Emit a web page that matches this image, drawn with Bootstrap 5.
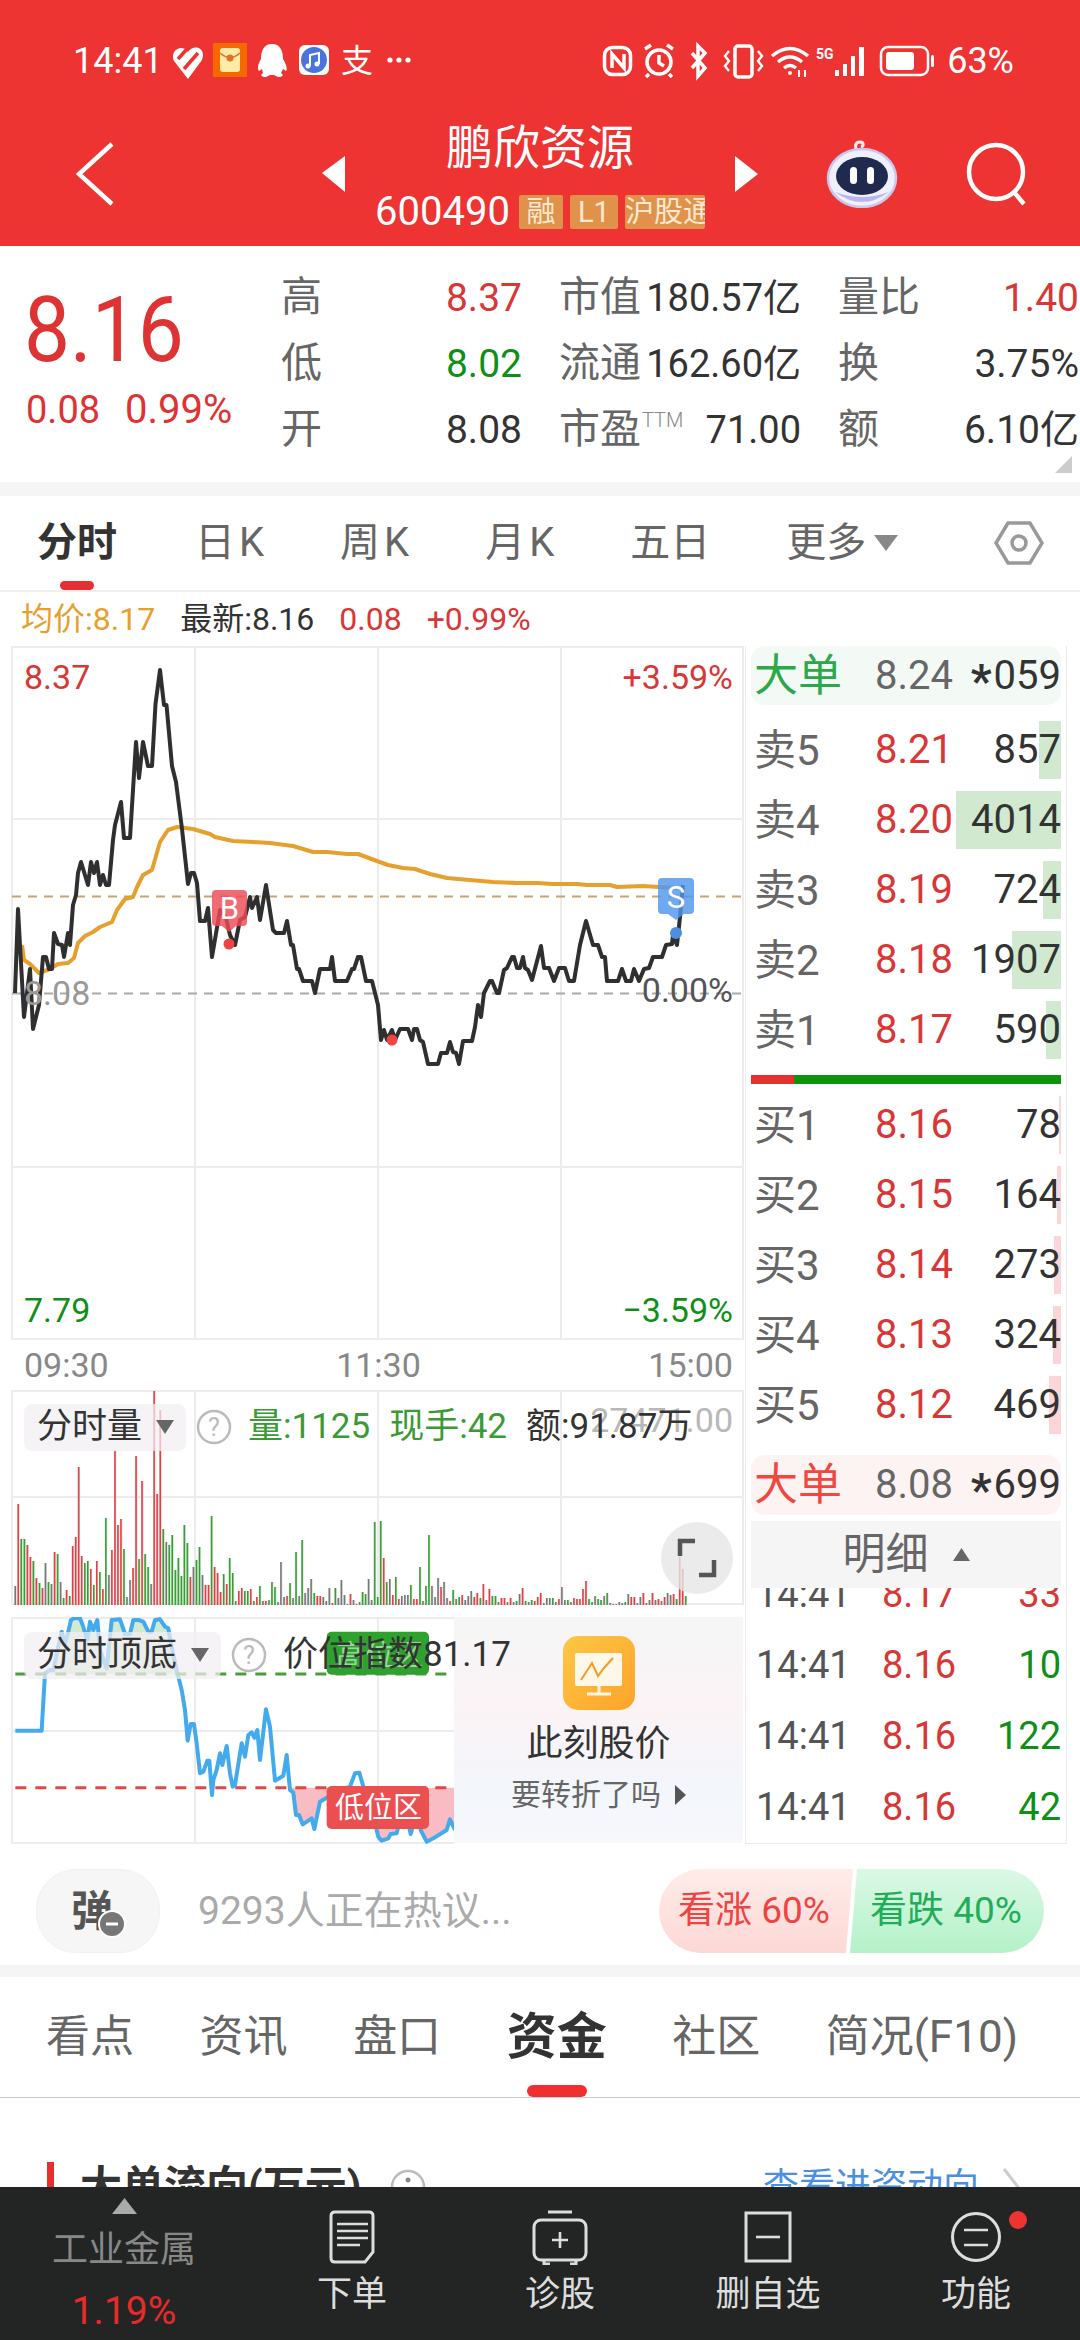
<!DOCTYPE html>
<html lang="zh-CN">
<head>
  <meta charset="UTF-8" />
  <title>鹏欣资源 600490</title>
  <meta name="viewport" content="width=device-width, initial-scale=1" />
  <link href="https://cdn.jsdelivr.net/npm/bootstrap@5.3.0/dist/css/bootstrap.min.css" rel="stylesheet" />
  <style>
    html, body { margin: 0; height: 2340px; overflow: hidden; background: #fff; }
    body { font-family: Roboto, "Noto Sans CJK SC", sans-serif; color: #333; }
    svg { display: block; }
    .c-red { color: #d93636; }
    .c-green { color: #0f8f16; }
    .c-gray { color: #666; }
    .c-vol { color: #3a9a35; }
    .phone { width: 1080px; height: 2340px; }
    .grey-band { height: 14px; background: #f5f5f5; flex: none; }
    .grey-band-thin { height: 12px; }

    /* red header */
    .head-red { background: #ee3333; color: #fff; height: 246px; flex: none; }
    .status-row { height: 122px; padding-left: 73px; padding-right: 66px; font-size: 36px; }
    .status-left { margin-left: 9px; }
    .status-pct { margin-left: 12px; }
    .nav-row { height: 104px; }
    .back-zone { width: 322px; padding-left: 76px; }
    .title-col { width: 390px; align-self: flex-start; }
    .stock-name { font-size: 47px; line-height: 52px; }
    .code-row { margin-top: 21px; height: 34px; width: 330px; }
    .stock-code { font-size: 40px; line-height: 34px; margin-right: 9px; }
    .tag-box { background: #e0924a; color: #fde9d2; font-size: 29px; line-height: 34px; height: 34px; border-radius: 2px; text-align: center; margin-right: 7px; overflow: hidden; white-space: nowrap; }
    .tag-rong { width: 44px; }
    .tag-l1 { width: 48px; }
    .tag-hu { width: 80px; margin-right: 0; }
    .robot-btn { margin-left: 67px; }
    .search-btn { margin-left: 67px; }

    /* quote block */
    .quote-box { height: 236px; flex: none; }
    .price-col { width: 281px; padding: 42px 0 0 24px; color: #dd3333; }
    .price-big { font-size: 82px; line-height: 90px; transform: scaleY(1.1); transform-origin: 50% 80%; }
    .price-sub { font-size: 38px; line-height: 40px; margin-top: 12px; white-space: nowrap; margin-left: 2px; }
    .price-pct { margin-left: 25px; font-size: 40px; }
    .stat-grid { display: grid; grid-template-columns: 241px 242px 241px; column-gap: 37px; grid-auto-rows: 66px; padding-top: 19px; }
    .stat-cell { display: flex; justify-content: space-between; align-items: center; font-size: 39px; white-space: nowrap; }
    .stat-wide { font-size: 38px; }
    .stat-name { font-size: 41px; color: #666; }
    .stat-name sup { font-size: 20px; top: -.8em; color: #888; font-weight: 300; margin-left: 1px; }
    .corner-mark { right: 8px; bottom: 9px; }

    /* chart period tabs */
    .period-tabs { height: 96px; padding-left: 37px; gap: 76px; border-bottom: 2px solid #eee; flex: none; }
    .period-tabs .nav-link { padding: 0; color: #666; font-size: 40px; line-height: 94px; height: 94px; }
    .period-tabs .nav-link.active { color: #333; font-weight: 700; margin-right: 2px; }
    .period-tabs .nav-link.active::after { content: ""; position: absolute; left: 23px; right: 23px; bottom: 0; height: 9px; background: #e53030; border-radius: 5px; }
    .k-letter { margin-left: 4px; }
    .set-btn { right: 36px; top: 24px; }
    .legend-row { height: 54px; font-size: 32px; padding-left: 21px; gap: 25px; flex: none; white-space: nowrap; }
    .legend-avg { color: #e5a02d; }

    /* left column charts */
    .charts-main { height: 1198px; flex: none; }
    .left-col { width: 745px; flex: none; }
    .chart-panel { height: 694px; }
    .time-row { height: 50px; padding: 0 12px 0 24px; font-size: 34px; color: #888; }
    .vol-panel { height: 215px; margin-bottom: 12px; }
    .osc-panel { height: 227px; }
    .lbl { position: absolute; font-size: 34px; line-height: 40px; white-space: nowrap; }
    .lbl-hi { left: 24px; top: 11px; }
    .lbl-hip { right: 12px; top: 11px; }
    .lbl-base { left: 24px; top: 327px; color: #999; }
    .lbl-basep { right: 12px; top: 324px; color: #555; }
    .lbl-lo { left: 24px; top: 644px; }
    .lbl-lop { right: 12px; top: 644px; }
    .chip-row { position: absolute; left: 24px; top: 11px; font-size: 35px; white-space: nowrap; }
    .osc-panel .chip-row { top: 12px; }
    .pick-chip { height: 47px; border-radius: 8px; background: rgba(243, 238, 243, .72); padding: 0 12px 0 13px; font-size: 35px; color: #333; gap: 14px; }
    .help-dot { margin-left: 10px; margin-right: 16px; }
    .vol-gap { margin-right: 19px; }
    .amt-gap { margin-right: 19px; }
    .osc-value { font-size: 35px; }
    .total-lbl { position: absolute; right: 12px; top: 10px; font-size: 34px; line-height: 40px; color: #b8b8b8; }
    .vol-holder { width: 454px; flex: none; }
    .promo-box { width: 289px; height: 226px; padding-top: 19px; background: linear-gradient(180deg, #f5f6f7 0%, #fbf3f5 40%, #f3f6fb 75%, #f6f8fc 100%); }
    .promo-title { font-size: 36px; line-height: 44px; margin-top: 12px; color: #333; }
    .promo-sub { font-size: 30px; line-height: 40px; margin-top: 9px; color: #666; gap: 14px; }

    /* right column order book */
    .book-col { width: 322px; flex: none; border: 1px solid #ececec; border-top: 0; }
    .big-row { height: 59px; margin: 0 5px; padding: 0 0 0 3px; border-radius: 14px; font-size: 40px; }
    .big-buy { background: #f3f9f5; }
    .big-sell { background: #fdf3f3; height: 60px; margin-top: 15px; }
    .big-name { width: 121px; font-size: 44px; }
    .big-buy .big-name { color: #2ba84a; }
    .big-sell .big-name { color: #f0483e; }
    .big-price { color: #666; }
    .big-star { font-size: 46px; font-weight: 700; line-height: 30px; position: relative; top: 8px; margin-right: 2px; }
    .depth-list { margin: 10px 5px 0; }
    .depth-list-buy { margin-top: 0; }
    .depth-row { height: 70px; position: relative; padding: 0 0 0 3px; font-size: 40px; }
    .depth-name { width: 121px; color: #666; font-size: 42px; }
    .depth-row > span { position: relative; }
    .depth-fill { position: absolute !important; right: 0; top: 6px; height: 58px; }
    .fill-sell { background: #d0e9cf; }
    .fill-buy { background: #fbd5d7; }
    .split-bar { height: 9px; margin: 10px 5px 6px; background: #0f930f; }
    .split-red { width: 43px; height: 100%; background: #e53030; }
    .detail-bar { height: 67px; margin: 6px 5px 0; background: #f5f5f5; font-size: 43px; color: #666; gap: 24px; position: relative; z-index: 1; }
    .tick-box { height: 256px; }
    .tick-list { margin-top: -29px; padding: 0 5px 0 10px; }
    .tick-row { height: 71px; font-size: 38px; }
    .tick-time { width: 126px; color: #555; }

    /* comment bar */
    .comment-bar { height: 121px; padding: 25px 36px 12px 36px; flex: none; }
    .danmu-pill { width: 124px; height: 84px; border-radius: 40px; padding-right: 12px; background: #f6f6f6; border: 1px solid #f1f1f1; font-size: 42px; font-weight: 700; color: #555; }
    .danmu-off { right: 33px; bottom: 14px; }
    .comment-tip { margin-left: 38px; font-size: 39px; color: #aaa; white-space: nowrap; }
    .vote-pill { height: 84px; font-size: 37px; white-space: nowrap; }
    .vote-up, .vote-down { width: 194px; height: 84px; line-height: 84px; }
    .vote-up { color: #ee4444; padding-left: 19px; border-radius: 42px 0 0 42px; background: linear-gradient(180deg, #feece9, #fdd8d5); clip-path: polygon(0 0, 100% 0, calc(100% - 7px) 100%, 0 100%); }
    .vote-down { color: #1fae57; padding-left: 20px; margin-left: -3px; border-radius: 0 42px 42px 0; background: linear-gradient(180deg, #dcf8e6, #b3f2c8); clip-path: polygon(7px 0, 100% 0, 100% 100%, 0 100%); }

    /* section tabs */
    .section-tabs { height: 121px; padding: 0 62px 0 46px; border-bottom: 1px solid #ccc; flex: none; }
    .section-tabs .nav-link { padding: 0; color: #666; font-size: 44px; line-height: 120px; height: 120px; position: relative; }
    .section-tabs .nav-link.active { color: #333; font-weight: 700; font-size: 50px; }
    .section-tabs .nav-link.active::after { content: ""; position: absolute; left: 20px; right: 20px; bottom: 0; height: 12px; background: #f03030; border-radius: 6px; }
    .flow-box { height: 89px; flex: none; }
    .flow-head { padding: 61px 60px 0 47px; }
    .flow-mark { width: 7px; height: 50px; background: #e53030; margin-right: 26px; }
    .flow-title { font-size: 42px; font-weight: 700; line-height: 56px; color: #333; margin-right: 29px; white-space: nowrap; }
    .flow-link { font-size: 36px; color: #4a90e2; margin-right: 23px; }

    /* footer */
    .foot-bar { height: 153px; background: #222523; color: #ddd; flex: none; }
    .sector-col { width: 248px; }
    .sector-up { margin: 11px 0 0; }
    .sector-name { font-size: 36px; line-height: 44px; margin-top: 14px; color: #888; }
    .sector-pct { font-size: 39px; line-height: 44px; margin-top: 17px; color: #e82a2a; }
    .foot-item { width: 208px; position: relative; padding-top: 22px; }
    .foot-label { font-size: 35px; line-height: 40px; margin-top: 10px; }
    .foot-dot { position: absolute; right: 53px; top: 24px; width: 18px; height: 18px; border-radius: 50%; background: #ee3333; }
  </style>
</head>
<body>
  <div class="phone d-flex flex-column overflow-hidden">

    <header class="head-red">
      <div class="status-row d-flex align-items-center">
        <span>14:41</span>
        <svg class="status-left" width="242" height="44" viewBox="172 40 242 44">
          <path d="M188 80 L174 62 C170 54 178 46 185 50 L188 53 C192 46 203 47 203 56 C203 60 201 63 199 65 Z" fill="#fff" />
          <path d="M178 60 L187 50 M184 70 L198 54" stroke="#ee3333" stroke-width="3.5" />
          <rect x="213" y="44" width="34" height="34" fill="#f56a00" />
          <rect x="220" y="49" width="20" height="24" rx="3" fill="#ffeaa6" />
          <path d="M220 54 Q230 63 240 54" stroke="#e0702a" stroke-width="1.5" fill="none" />
          <circle cx="230" cy="59" r="3.5" fill="#e0702a" />
          <path d="M272 45 C263 45 261 53 261 60 C258 65 257 70 259 72 L262 70 L263 74 C260 76 261 78 266 78 L270 76 H274 L278 78 C283 78 284 76 281 74 L283 70 L286 72 C288 70 286 65 283 60 C283 53 281 45 272 45 Z" fill="#fff" />
          <rect x="299" y="46" width="30" height="30" rx="6" fill="#fff" />
          <circle cx="314" cy="61" r="13" fill="#4a74dd" />
          <path d="M310 67 V56 L319 54 V65" stroke="#fff" stroke-width="2" fill="none" />
          <circle cx="308" cy="67" r="2.5" fill="#fff" />
          <circle cx="317" cy="65" r="2.5" fill="#fff" />
          <text x="341" y="73" font-size="32" fill="#fff">支</text>
          <circle cx="390" cy="61" r="2.6" fill="#fff" />
          <circle cx="399" cy="61" r="2.6" fill="#fff" />
          <circle cx="408" cy="61" r="2.6" fill="#fff" />
        </svg>
        <svg class="ms-auto" width="334" height="44" viewBox="598 40 334 44" fill="none" stroke="#fff" stroke-width="3.5">
          <rect x="601.5" y="48.5" width="26" height="27" rx="8" />
          <path d="M609 69 V55 L621 69 V55" stroke-width="3.5" />
          <circle cx="656" cy="63" r="12" />
          <path d="M656 56 V64 L661 67 M642 50 L648 46 M670 50 L664 46 M646 75 L643 78 M666 75 L669 78" />
          <path d="M689 54 L702 69 L695 77 V47 L702 54 L689 69" />
          <rect x="732" y="47" width="17" height="31" rx="3" />
          <path d="M726 52 L722 57 L726 62 L722 67 L726 72 M755 52 L759 57 L755 62 L759 67 L755 72" stroke-width="2.4" />
          <path d="M769 57 Q787 42 805 57 M775 63 Q787 53 799 63 M781 69 Q787 64 793 69" />
          <circle cx="787" cy="74" r="2" fill="#fff" stroke="none" />
          <path d="M796 71 V78 M802 71 V78" stroke-width="2" />
          <text x="813" y="60" font-size="14" font-weight="700" fill="#fff" stroke="none">5G</text>
          <g fill="#fff" stroke="none">
            <rect x="832" y="71" width="4" height="6" />
            <rect x="840" y="65" width="4" height="12" />
            <rect x="848" y="57" width="4" height="20" />
            <rect x="856" y="48" width="5" height="29" />
          </g>
          <rect x="878" y="48" width="47" height="28" rx="7" stroke-width="2.5" />
          <rect x="883" y="53" width="28" height="18" rx="3" fill="#fff" stroke="none" />
          <rect x="928" y="56" width="3" height="12" rx="1.5" fill="#fff" stroke="none" />
        </svg>
        <span class="status-pct">63%</span>
      </div>
      <div class="nav-row d-flex align-items-center">
        <div class="back-zone">
          <svg width="40" height="66" viewBox="0 0 40 66" fill="none" stroke="#fff" stroke-width="4.5"><path d="M36 3 L3 33 L36 63" /></svg>
        </div>
        <svg width="23" height="36" viewBox="0 0 23 36"><path d="M0 17 L23 0 V36 Z" fill="#fff" /></svg>
        <div class="title-col d-flex flex-column align-items-center">
          <div class="stock-name">鹏欣资源</div>
          <div class="code-row d-flex align-items-center">
            <span class="stock-code">600490</span>
            <span class="tag-box tag-rong">融</span>
            <span class="tag-box tag-l1">L1</span>
            <span class="tag-box tag-hu">沪股通</span>
          </div>
        </div>
        <svg width="23" height="36" viewBox="0 0 23 36"><path d="M23 18 L0 0 V36 Z" fill="#fff" /></svg>
        <svg class="robot-btn" width="74" height="68" viewBox="0 0 74 68">
          <path d="M33 12 C29 7 30 2 35 2 C39 2 39 6 36 7" stroke="#eee" stroke-width="3" fill="none" />
          <ellipse cx="37" cy="38" rx="34" ry="29" fill="#eef0fb" stroke="#c9c6f2" stroke-width="2.5" />
          <path d="M10 52 Q37 72 64 52 Q37 62 10 52 Z" fill="#b9b6ee" />
          <ellipse cx="37" cy="36" rx="26" ry="19" fill="#1f2a4e" />
          <rect x="25" y="27" width="7" height="17" rx="3.5" fill="#fff" />
          <rect x="42" y="27" width="7" height="17" rx="3.5" fill="#fff" />
        </svg>
        <svg class="search-btn" width="62" height="64" viewBox="0 0 62 64" fill="none" stroke="#fff" stroke-width="4.5"><circle cx="30" cy="30" r="27" /><path d="M48 50 L58 62" /></svg>
      </div>
    </header>

    <section class="quote-box d-flex position-relative">
      <div class="price-col">
        <div class="price-big">8.16</div>
        <div class="price-sub"><span>0.08</span><span class="price-pct">0.99%</span></div>
      </div>
      <div class="stat-grid">
        <div class="stat-cell"><span class="stat-name">高</span><span class="c-red">8.37</span></div>
        <div class="stat-cell stat-wide"><span class="stat-name">市值</span><span>180.57亿</span></div>
        <div class="stat-cell"><span class="stat-name">量比</span><span class="c-red">1.40</span></div>
        <div class="stat-cell"><span class="stat-name">低</span><span class="c-green">8.02</span></div>
        <div class="stat-cell stat-wide"><span class="stat-name">流通</span><span>162.60亿</span></div>
        <div class="stat-cell"><span class="stat-name">换</span><span>3.75%</span></div>
        <div class="stat-cell"><span class="stat-name">开</span><span>8.08</span></div>
        <div class="stat-cell stat-wide"><span class="stat-name">市盈<sup>TTM</sup></span><span>71.00</span></div>
        <div class="stat-cell"><span class="stat-name">额</span><span>6.10亿</span></div>
      </div>
      <svg class="corner-mark position-absolute" width="17" height="17" viewBox="0 0 17 17"><path d="M17 0 V17 H0 Z" fill="#ccc" /></svg>
    </section>
    <div class="grey-band"></div>

    <nav class="nav period-tabs position-relative">
      <a class="nav-link active position-relative">分时</a>
      <a class="nav-link">日<span class="k-letter">K</span></a>
      <a class="nav-link">周<span class="k-letter">K</span></a>
      <a class="nav-link">月<span class="k-letter">K</span></a>
      <a class="nav-link">五日</a>
      <a class="nav-link d-flex align-items-center gap-2">更多<svg width="24" height="16" viewBox="0 0 24 16"><path d="M0 0 H24 L12 16 Z" fill="#888" /></svg></a>
      <svg class="set-btn position-absolute" width="50" height="46" viewBox="0 0 50 46" fill="none" stroke="#999" stroke-width="3.5"><path d="M2 23 L14 3 H36 L48 23 L36 43 H14 Z" /><circle cx="25" cy="23" r="7" /></svg>
    </nav>
    <div class="legend-row d-flex align-items-center">
      <span class="legend-avg">均价:8.17</span>
      <span>最新:8.16</span>
      <span class="c-red">0.08</span>
      <span class="c-red">+0.99%</span>
    </div>

    <main class="charts-main d-flex">
      <div class="left-col">
        <div class="chart-panel position-relative">
          <svg width="745" height="694" viewBox="0 646 745 694" fill="none">
            <path d="M12 647 H743 M12 819 H743 M12 1167 H743 M12 1339 H743 M12 646 V1340 M195 646 V1340 M378 646 V1340 M561 646 V1340 M743 646 V1340" stroke="#ececec" stroke-width="2" />
            <path d="M12 896.5 H743" stroke="#c4a676" stroke-width="2" stroke-dasharray="9 7" />
            <path d="M12 993.5 H743" stroke="#aaa" stroke-width="2" stroke-dasharray="9 7" />
            <polyline stroke="#e5a02d" stroke-width="4" stroke-linejoin="round" points="22,945 24,960 30,964 39,973 50,969 58,964 68,963 74,958 78,943 85,936 93,932 100,927 112,922 117,910 125,899 133,897 137,887 143,875 152,870 160,842 168,830 177,827 193,829 210,834 215,837 233,841 253,842 270,843 293,846 313,852 327,852 347,854 358,854 377,861 388,865 403,868 415,869 430,874 447,878 470,880 493,882 517,883 537,883 553,884 577,884 587,885 610,885 617,887 643,886 658,887 677,888" />
            <polyline stroke="#2f2f2f" stroke-width="4" stroke-linejoin="round" points="15,993 18,909 24,1017 30,969 33,1029 39,1005 43,957 46,957 49,969 52,969 54,933 58,944 62,945 64,957 68,933 70,945 73,905 76,895 78,873 81,862 88,885 91,862 94,873 97,862 100,885 103,875 106,885 109,885 113,840 115,825 121,802 124,838 130,838 136,742 139,778 143,742 148,766 152,766 155.5,704 160,670 164,705 166.5,705 172,766 176,782 182,829 188,884 191,873 194,873 197,883 200,921 205,921 208,908 212,957 220,910 226,918 230,935 235,945 240,920 245,917 250,897 252,908 257,897 260,920 266,885 273,930 276,933 284,933 287,921 291,945 293,945 297,969 299,969 303,981 312,981 315,993 320,969 330,969 332,957 335,981 347,981 352,969 354,969 358,957 361,957 366,981 372,981 378,1005 381,1040 384,1030 387,1040 392,1030 395,1040 400,1029 408,1029 412,1040 414,1029 417,1029 420,1040 423,1042 428,1064 438,1064 441,1053 447,1053 450,1042 453,1052 456,1053 459,1064 463,1041 472,1041 475,1027 478,1005 481,1017 484,993 490,981 492,981 497,993 499,993 504,970 507,968 512,957 514,957 517,968 520,968 523,957 525,968 528,970 532,980 541,946 544,968 549,968 554,981 559,968 565,968 569,981 574,981 580,945 586,921 593,945 598,945 602,957 605,957 607,981 618,981 622,969 626,981 631,981 634,969 639,981 644,969 649,968 653,957 662,957 666,945 672,944 673,935 677,945 680,917 683,885" />
            <circle cx="229" cy="944" r="5.5" fill="#ee4444" />
            <circle cx="392" cy="1040" r="5.5" fill="#ee4444" />
            <path d="M216 890 H243 Q247 890 247 894 V922 Q247 926 243 926 H236 L229 932 L222 926 H216 Q212 926 212 922 V894 Q212 890 216 890 Z" fill="#ee4b55" fill-opacity=".82" />
            <text x="229.5" y="919" font-size="31" fill="#fff" stroke="none" text-anchor="middle">B</text>
            <circle cx="676" cy="933" r="6" fill="#4a8fe0" />
            <path d="M662 878 H690 Q694 878 694 882 V910 Q694 914 690 914 H684 L676 920 L668 914 H662 Q658 914 658 910 V882 Q658 878 662 878 Z" fill="#4f97ee" fill-opacity=".82" />
            <text x="676" y="908" font-size="31" fill="#fff" stroke="none" text-anchor="middle">S</text>
          </svg>
          <span class="lbl lbl-hi c-red">8.37</span>
          <span class="lbl lbl-hip c-red">+3.59%</span>
          <span class="lbl lbl-base">8.08</span>
          <span class="lbl lbl-basep">0.00%</span>
          <span class="lbl lbl-lo c-green">7.79</span>
          <span class="lbl lbl-lop c-green">−3.59%</span>
        </div>
        <div class="time-row d-flex align-items-center justify-content-between">
          <span>09:30</span><span>11:30</span><span>15:00</span>
        </div>
        <div class="vol-panel position-relative">
          <svg id="volChart" width="745" height="215" viewBox="0 1390 745 215" fill="none">
            <path d="M12 1391 H743 M12 1497 H743 M12 1604 H743 M12 1390 V1605 M195 1390 V1605 M378 1390 V1605 M561 1390 V1605 M743 1390 V1605" stroke="#ececec" stroke-width="2" />
            <g id="volBars"></g>
            <circle cx="697" cy="1558" r="36" fill="#e6e6e6" fill-opacity=".8" />
            <path d="M680 1556 V1541 H695 M714 1560 V1575 H699" stroke="#555" stroke-width="4.5" />
          </svg>
          <span class="total-lbl">27471.00</span>
          <div class="chip-row d-flex align-items-center">
            <div class="pick-chip d-flex align-items-center">分时量<svg width="18" height="14" viewBox="0 0 18 14"><path d="M0 0 H18 L9 14 Z" fill="#666" /></svg></div>
            <svg class="help-dot" width="36" height="36" viewBox="0 0 36 36"><circle cx="18" cy="18" r="16" fill="#fff" stroke="#bbb" stroke-width="2.5" /><text x="18" y="27" font-size="25" fill="#bbb" text-anchor="middle">?</text></svg>
            <span class="vol-gap c-vol">量:1125</span>
            <span class="amt-gap c-vol">现手:42</span>
            <span>额:91.87万</span>
          </div>
        </div>
        <div class="osc-panel position-relative d-flex">
          <div class="vol-holder">
            <svg width="454" height="227" viewBox="0 1617 454 227" fill="none">
              <path d="M12 1618 H454 M12 1731 H454 M12 1843 H454 M12 1617 V1844 M195 1617 V1844 M378 1617 V1844" stroke="#ececec" stroke-width="2" />
              <g transform="translate(0 1610) scale(.33333)">
                <polygon fill="#d3ead2" points="135,192 135,190 148,180 160,180 170,130 185,65 195,100 205,65 213,30 222,25 240,25 248,45 262,90 270,35 280,60 292,30 300,120 320,175 335,30 360,28 375,72 390,72 400,30 415,30 430,35 445,65 455,65 465,30 480,28 495,50 505,55 515,110 530,180 534,192" />
                <polygon fill="#f8bcc2" points="870,533 870,540 880,548 888,615 897,615 908,643 935,625 943,657 960,575 985,560 1000,545 1050,533 1090,533 1110,560 1120,620 1135,680 1145,692 1165,685 1172,672 1190,670 1195,650 1225,640 1232,672 1245,630 1258,635 1262,660 1280,695 1300,685 1340,660 1350,628 1365,660 1365,533" />
                <polyline stroke="#43aaee" stroke-width="12" stroke-linejoin="round" points="46,362 125,362 135,190 148,180 160,180 170,130 185,65 195,100 205,65 213,30 222,25 240,25 248,45 262,90 270,35 280,60 292,30 300,120 320,175 335,30 360,28 375,72 390,72 400,30 415,30 430,35 445,65 455,65 465,30 480,28 495,50 505,55 515,110 530,180 545,240 555,300 563,392 572,342 582,342 590,400 600,490 610,485 622,452 628,452 636,555 640,510 650,480 660,430 667,465 680,408 690,490 698,530 705,525 725,400 735,440 745,375 755,367 763,383 772,360 780,450 798,298 810,350 825,512 850,497 860,435 870,540 880,548 888,615 897,615 908,643 935,625 943,657 960,575 985,560 1000,545 1050,530 1065,490 1078,488 1090,530 1110,560 1120,620 1135,680 1145,692 1165,685 1172,672 1190,670 1195,650 1225,640 1232,672 1245,630 1258,635 1262,660 1280,695 1300,685 1340,660 1350,628 1365,660" />
                <path d="M46 192 H1365" stroke="#4a9e3a" stroke-width="9" stroke-dasharray="33 27" />
                <path d="M46 533 H1365" stroke="#e04848" stroke-width="9" stroke-dasharray="33 27" />
                <rect x="980" y="65" width="307" height="129" rx="15" fill="#2fa12f" />
                <rect x="980" y="528" width="307" height="129" rx="15" fill="#ec4f50" />
              </g>
              <text x="336" y="1666" font-size="29" fill="#9ad59a" stroke="none">高位区</text>
              <text x="335" y="1818" font-size="29" fill="#fff" stroke="none">低位区</text>
            </svg>
          </div>
          <div class="promo-box d-flex flex-column align-items-center">
            <svg width="72" height="74" viewBox="0 0 72 74">
              <defs><linearGradient id="promoGrad" x1="0" y1="0" x2="1" y2="1"><stop offset="0" stop-color="#fdc745" /><stop offset="1" stop-color="#ffa32a" /></linearGradient></defs>
              <rect width="72" height="74" rx="15" fill="url(#promoGrad)" />
              <rect x="12" y="17" width="47" height="33" rx="2" fill="#fff7e8" />
              <path d="M24 58 H48 M36 50 V58" stroke="#fff7e8" stroke-width="3" />
              <path d="M18 44 L29 27 L35 40 L41 32 L50 22" stroke="#f79a24" stroke-width="2" fill="none" />
            </svg>
            <div class="promo-title">此刻股价</div>
            <div class="promo-sub d-flex align-items-center">要转折了吗<svg width="11" height="20" viewBox="0 0 11 20"><path d="M0 0 L11 10 L0 20 Z" fill="#555" /></svg></div>
          </div>
          <div class="chip-row d-flex align-items-center">
            <div class="pick-chip d-flex align-items-center">分时顶底<svg width="18" height="14" viewBox="0 0 18 14"><path d="M0 0 H18 L9 14 Z" fill="#666" /></svg></div>
            <svg class="help-dot" width="36" height="36" viewBox="0 0 36 36"><circle cx="18" cy="18" r="16" fill="#fff" stroke="#bbb" stroke-width="2.5" /><text x="18" y="27" font-size="25" fill="#bbb" text-anchor="middle">?</text></svg>
            <span class="osc-value">价位指数81.17</span>
          </div>
        </div>
      </div>

      <aside class="book-col">
        <div class="big-row big-buy d-flex align-items-center">
          <span class="big-name">大单</span><span class="big-price">8.24</span><span class="ms-auto"><span class="big-star">*</span>059</span>
        </div>
        <div class="depth-list">
          <div class="depth-row d-flex align-items-center"><i class="depth-fill fill-sell" style="width:22px"></i><span class="depth-name">卖5</span><span class="c-red">8.21</span><span class="ms-auto">857</span></div>
          <div class="depth-row d-flex align-items-center"><i class="depth-fill fill-sell" style="width:105px"></i><span class="depth-name">卖4</span><span class="c-red">8.20</span><span class="ms-auto">4014</span></div>
          <div class="depth-row d-flex align-items-center"><i class="depth-fill fill-sell" style="width:18px"></i><span class="depth-name">卖3</span><span class="c-red">8.19</span><span class="ms-auto">724</span></div>
          <div class="depth-row d-flex align-items-center"><i class="depth-fill fill-sell" style="width:49px"></i><span class="depth-name">卖2</span><span class="c-red">8.18</span><span class="ms-auto">1907</span></div>
          <div class="depth-row d-flex align-items-center"><i class="depth-fill fill-sell" style="width:15px"></i><span class="depth-name">卖1</span><span class="c-red">8.17</span><span class="ms-auto">590</span></div>
        </div>
        <div class="split-bar"><div class="split-red"></div></div>
        <div class="depth-list depth-list-buy">
          <div class="depth-row d-flex align-items-center"><i class="depth-fill fill-buy" style="width:2px"></i><span class="depth-name">买1</span><span class="c-red">8.16</span><span class="ms-auto">78</span></div>
          <div class="depth-row d-flex align-items-center"><i class="depth-fill fill-buy" style="width:4px"></i><span class="depth-name">买2</span><span class="c-red">8.15</span><span class="ms-auto">164</span></div>
          <div class="depth-row d-flex align-items-center"><i class="depth-fill fill-buy" style="width:7px"></i><span class="depth-name">买3</span><span class="c-red">8.14</span><span class="ms-auto">273</span></div>
          <div class="depth-row d-flex align-items-center"><i class="depth-fill fill-buy" style="width:8px"></i><span class="depth-name">买4</span><span class="c-red">8.13</span><span class="ms-auto">324</span></div>
          <div class="depth-row d-flex align-items-center"><i class="depth-fill fill-buy" style="width:12px"></i><span class="depth-name">买5</span><span class="c-red">8.12</span><span class="ms-auto">469</span></div>
        </div>
        <div class="big-row big-sell d-flex align-items-center">
          <span class="big-name">大单</span><span class="big-price">8.08</span><span class="ms-auto"><span class="big-star">*</span>699</span>
        </div>
        <div class="detail-bar d-flex align-items-center justify-content-center">明细<svg width="17" height="13" viewBox="0 0 17 13"><path d="M0 13 L8.5 0 L17 13 Z" fill="#666" /></svg></div>
        <div class="tick-box overflow-hidden">
          <div class="tick-list">
            <div class="tick-row d-flex align-items-center"><span class="tick-time">14:41</span><span class="c-red">8.17</span><span class="ms-auto c-red">33</span></div>
            <div class="tick-row d-flex align-items-center"><span class="tick-time">14:41</span><span class="c-red">8.16</span><span class="ms-auto c-green">10</span></div>
            <div class="tick-row d-flex align-items-center"><span class="tick-time">14:41</span><span class="c-red">8.16</span><span class="ms-auto c-green">122</span></div>
            <div class="tick-row d-flex align-items-center"><span class="tick-time">14:41</span><span class="c-red">8.16</span><span class="ms-auto c-green">42</span></div>
          </div>
        </div>
      </aside>
    </main>

    <div class="comment-bar d-flex align-items-center">
      <div class="danmu-pill d-flex align-items-center justify-content-center position-relative">弹
        <svg class="danmu-off position-absolute" width="28" height="28" viewBox="0 0 28 28"><circle cx="14" cy="14" r="13" fill="#777" stroke="#fff" stroke-width="2" /><path d="M8 14 H20" stroke="#fff" stroke-width="3" /></svg>
      </div>
      <div class="comment-tip">9293人正在热议...</div>
      <div class="vote-pill d-flex ms-auto">
        <div class="vote-up">看涨 60%</div>
        <div class="vote-down">看跌 40%</div>
      </div>
    </div>
    <div class="grey-band grey-band-thin"></div>

    <nav class="nav section-tabs justify-content-between">
      <a class="nav-link">看点</a>
      <a class="nav-link">资讯</a>
      <a class="nav-link">盘口</a>
      <a class="nav-link active">资金</a>
      <a class="nav-link">社区</a>
      <a class="nav-link">简况(F10)</a>
    </nav>
    <section class="flow-box overflow-hidden">
      <div class="flow-head d-flex align-items-center">
        <span class="flow-mark"></span>
        <span class="flow-title">大单流向(万元)</span>
        <svg width="36" height="36" viewBox="0 0 36 36"><circle cx="18" cy="18" r="16" fill="none" stroke="#bbb" stroke-width="2.5" /><circle cx="18" cy="11" r="2.5" fill="#888" /></svg>
        <span class="flow-link ms-auto">查看进资动向</span>
        <svg width="18" height="40" viewBox="0 0 18 40" fill="none" stroke="#ccc" stroke-width="3"><path d="M2 2 L16 20 L2 38" /></svg>
      </div>
    </section>

    <footer class="foot-bar d-flex">
      <div class="sector-col d-flex flex-column align-items-center">
        <svg class="sector-up" width="25" height="16" viewBox="0 0 25 16"><path d="M12.5 0 L25 16 H0 Z" fill="#aaa" /></svg>
        <div class="sector-name">工业金属</div>
        <div class="sector-pct">1.19%</div>
      </div>
      <div class="foot-item d-flex flex-column align-items-center">
        <svg width="48" height="56" viewBox="0 0 48 56" fill="none" stroke="#ddd" stroke-width="3"><path d="M7 3 H41 Q45 3 45 7 V43 L37 53 H7 Q3 53 3 49 V7 Q3 3 7 3 Z" /><path d="M9 15 H40 M9 22 H40 M9 29 H40 M9 36 H32" stroke-width="2.6" /></svg>
        <div class="foot-label">下单</div>
      </div>
      <div class="foot-item d-flex flex-column align-items-center">
        <svg width="56" height="56" viewBox="0 0 56 56" fill="none" stroke="#ddd" stroke-width="3"><path d="M16 3 H40" /><rect x="2" y="11" width="52" height="40" rx="7" /><path d="M28 23 V39 M20 31 H36" stroke-width="2.6" /><path d="M12 52 V55 H18 M38 55 H44 V52" /></svg>
        <div class="foot-label">诊股</div>
      </div>
      <div class="foot-item d-flex flex-column align-items-center">
        <svg width="48" height="56" viewBox="0 0 48 56" fill="none" stroke="#ddd" stroke-width="3"><rect x="2" y="4" width="44" height="48" /><path d="M12 28 H36" stroke-width="2.6" /></svg>
        <div class="foot-label">删自选</div>
      </div>
      <div class="foot-item d-flex flex-column align-items-center">
        <svg width="50" height="56" viewBox="0 0 50 56" fill="none" stroke="#ddd" stroke-width="3"><circle cx="25" cy="28" r="23.5" /><path d="M13 21 H37 M13 36 H37" stroke-width="2.6" /></svg>
        <div class="foot-label">功能</div>
        <span class="foot-dot"></span>
      </div>
    </footer>
  </div>

  <script>
    // per minute volume: colour letter + bar height in px, read off the chart
    const volData = "k19 r101 g66 g66 r60 r48 g44 r27 g22 r17 k42 g23 k21 r53 g51 k23 g7 r15 g9 r59 r68 r138 r49 g42 g44 r36 g20 r44 g33 r16 g87 k30 r55 r154 r80 r86 g56 k8 k25 r37 r149 g46 r124 g51 g38 k21 r214 r111 r195 g76 k63 g60 g70 g35 g47 g29 g80 g62 r28 k38 g45 g58 k30 r20 r20 g89 r38 r32 r13 g31 r21 g47 g32 k4 r14 r17 g14 g14 r16 g4 r8 g19 r4 r4 g5 g23 g18 k3 k43 k8 r9 g22 k7 g53 k9 g65 k12 k17 k26 g12 r9 r9 k8 k4 k17 r2 g17 k7 k25 k10 k1 r11 k5 r1 k3 g13 g11 k26 k5 g83 g8 g84 r47 g23 k26 r10 g28 r6 k9 k10 k10 g20 r6 r6 g38 k4 g19 g70 k19 k8 k27 r18 k23 k7 r4 g15 k6 g8 r10 k5 k9 k14 r8 r12 g7 r21 k5 r16 g9 g9 k3 r7 r7 k3 r7 k3 g4 k11 r17 g4 k3 g5 r4 r8 r12 k2 k7 k7 g7 k3 r6 k18 k5 g5 k3 r7 r6 r6 r16 r24 g6 g3 k9 g6 g5 k9 g12 k2 k1 k1 k3 k2 g3 k11 r8 r8 k2 k8 r12 k2 k5 r12 k5 r6 k4 r8 k12 k10 r11 g6 r48 r36 g9".split(" ");
    const dark = { r: "#d8444a", g: "#3f983c", k: "#777777" };
    const light = { r: "#ffbcc0", g: "#b4e6b1", k: "#d4d4d4" };
    const step = (685.7 - 15.3) / (volData.length - 1);
    let bars = "";
    volData.forEach((item, i) => {
      const h = Number(item.slice(1));
      const x = 15.3 + i * step;
      bars += `<rect x="${(x - 1).toFixed(1)}" y="${1605 - h}" width="2.3" height="${h}" fill="${light[item[0]]}"/>`;
      bars += `<rect x="${(x - 0.8).toFixed(1)}" y="${1605 - h}" width="1.5" height="${h}" fill="${dark[item[0]]}"/>`;
    });
    document.getElementById("volBars").innerHTML = bars;
  </script>
  <script src="https://cdn.jsdelivr.net/npm/bootstrap@5.3.0/dist/js/bootstrap.bundle.min.js"></script>
</body>
</html>
